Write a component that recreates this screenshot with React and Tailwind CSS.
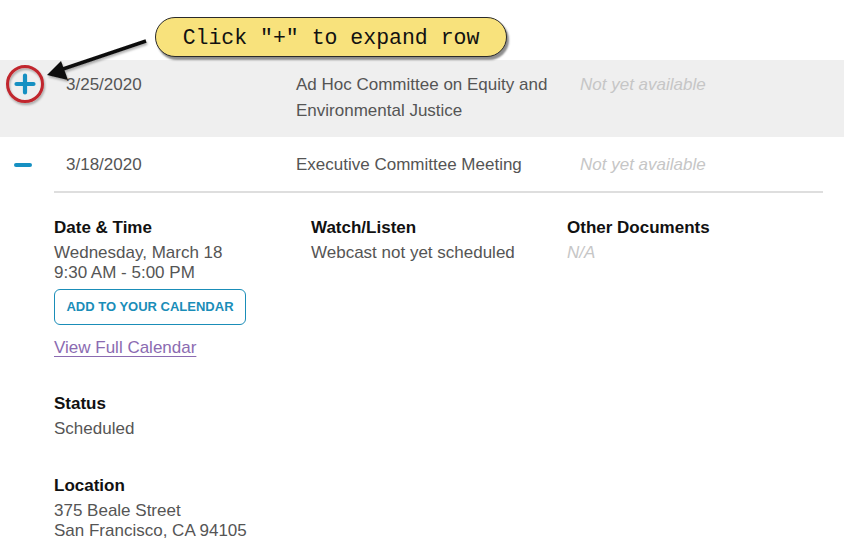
import React from 'react';

const sans = { fontFamily: '"Liberation Sans", Arial, sans-serif' };

function PlusIcon() {
  return (
    <svg width="22" height="22" viewBox="0 0 22 22" className="block">
      <path d="M11 2.5v17M2.5 11h17" stroke="#1690c2" strokeWidth="4.2" strokeLinecap="round" />
    </svg>
  );
}

function MinusIcon() {
  return <span className="block w-[18px] h-[3.5px] rounded-full bg-[#1690c2]" />;
}

function Callout() {
  return (
    <>
      <div className="absolute left-[155px] top-[17px] w-[352px] h-[40px] rounded-[20px] border-[1.5px] border-[#2a2a2a] bg-[#f8e27c] shadow-[2px_3px_2px_rgba(0,0,0,0.45)] flex items-center justify-center pt-[2px]">
        <span className="text-[21.5px] text-[#111]" style={{ fontFamily: '"Liberation Mono", "DejaVu Sans Mono", monospace' }}>
          Click "+" to expand row
        </span>
      </div>
      <svg className="absolute left-0 top-0 pointer-events-none" width="200" height="120" viewBox="0 0 200 120">
        <defs>
          <filter id="sh" x="-20%" y="-20%" width="140%" height="140%">
            <feDropShadow dx="1" dy="2" stdDeviation="1" floodColor="#000" floodOpacity="0.3" />
          </filter>
        </defs>
        <g filter="url(#sh)">
          <line x1="146" y1="41" x2="60" y2="70" stroke="#111" strokeWidth="3.5" />
          <polygon points="47,75 61,61 68,80" fill="#111" />
          <circle cx="25" cy="84" r="17.5" fill="none" stroke="#c1272d" strokeWidth="3" />
        </g>
      </svg>
    </>
  );
}

function Field({ label, children }) {
  return (
    <div>
      <div className="text-[17px] leading-[24px] font-bold text-[#111] mb-[3px]">{label}</div>
      <div className="text-[17px] leading-[20px] text-[#555]">{children}</div>
    </div>
  );
}

export default function App() {
  return (
    <div className="relative w-[844px] h-[545px] overflow-hidden bg-white" style={sans}>
      <div className="h-[60px]" />

      {/* collapsed row */}
      <div className="flex bg-[#efefef] pt-[12px] pb-[13px] text-[17px] leading-[26px] text-[#555]">
        <div className="w-[66px] flex pl-[14px] pt-[1px]">
          <PlusIcon />
        </div>
        <div className="w-[230px]">3/25/2020</div>
        <div className="w-[284px] pr-[14px]">Ad Hoc Committee on Equity and Environmental Justice</div>
        <div className="italic text-[#c6c6c6]">Not yet available</div>
      </div>

      {/* expanded row */}
      <div className="flex pt-[15px] pb-[13px] text-[17px] leading-[26px] text-[#555]">
        <div className="w-[66px] flex items-center pl-[14px]">
          <MinusIcon />
        </div>
        <div className="w-[230px]">3/18/2020</div>
        <div className="w-[284px]">Executive Committee Meeting</div>
        <div className="italic text-[#c6c6c6]">Not yet available</div>
      </div>

      <div className="ml-[54px] mr-[21px] border-t-[2.5px] border-[#dedede] pt-[23px]">
        <div className="grid grid-cols-[257px_256px_1fr]">
          <div>
            <Field label="Date & Time">
              <div>Wednesday, March 18</div>
              <div>9:30 AM - 5:00 PM</div>
            </Field>
            <button className="mt-[6px] h-[36px] w-[192px] rounded-[6px] border border-[#1a8db8] text-[13px] font-bold text-[#1a8db8]">
              ADD TO YOUR CALENDAR
            </button>
            <div className="mt-[13px] text-[17px] leading-[20px]">
              <a className="text-[#8b6bb1] underline underline-offset-[3px]">View Full Calendar</a>
            </div>
          </div>
          <Field label="Watch/Listen">Webcast not yet scheduled</Field>
          <Field label="Other Documents">
            <span className="italic text-[#c6c6c6]">N/A</span>
          </Field>
        </div>

        <div className="mt-[34px]">
          <Field label="Status">Scheduled</Field>
        </div>
        <div className="mt-[35px]">
          <Field label="Location">
            <div>375 Beale Street</div>
            <div>San Francisco, CA 94105</div>
          </Field>
        </div>
      </div>

      <Callout />
    </div>
  );
}
